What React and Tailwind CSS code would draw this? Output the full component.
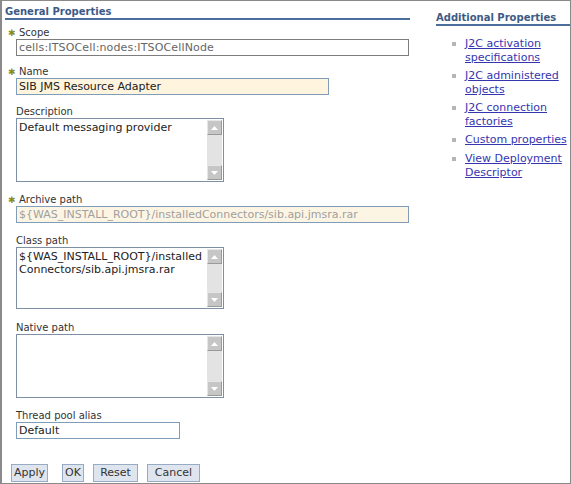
import React from "react";

const Star = () => (
  <span className="inline-block w-[11px] text-[9px] font-bold text-[#8c8c1c] leading-[12px]">✱</span>
);

const Label = ({ req, children, mt }) => (
  <div className={`leading-[12px] text-[#333333] ${mt} ${req ? "pl-[3px]" : "pl-[11px]"}`}>
    {req && <Star />}
    {children}
  </div>
);

const Arrow = ({ up }) => (
  <div className="w-[15px] h-[15px] bg-[#c6c6c6] border border-t-[#e6e6e6] border-l-[#e6e6e6] border-r-[#9a9a9a] border-b-[#9a9a9a] flex items-center justify-center">
    <svg width="7" height="4" viewBox="0 0 7 4">
      {up ? <polygon points="0,4 7,4 3.5,0" fill="#fff" /> : <polygon points="0,0 7,0 3.5,4" fill="#fff" />}
    </svg>
  </div>
);

const TextArea = ({ h, lines = [] }) => (
  <div className={`ml-[11px] w-[208px] ${h} border border-[#7f8fa3] bg-white flex`}>
    <div className="flex-1 pl-[2px] pt-[2px] leading-[13px] text-[11px] text-[#222] whitespace-nowrap overflow-hidden">
      {lines.map((l, i) => (
        <div key={i}>{l}</div>
      ))}
    </div>
    <div className="w-[15px] my-[1px] mr-[1px] bg-[#e3e3e3] flex flex-col justify-between">
      <Arrow up />
      <Arrow />
    </div>
  </div>
);

const Input = ({ w, bg = "bg-white", border = "border-[#7f9db9]", color = "text-[#222]", extra = "", children }) => (
  <div className={`ml-[11px] ${w} h-[17px] border ${border} ${bg} ${color} ${extra} pl-[2px] text-[11px] leading-[15px] whitespace-nowrap overflow-hidden`}>
    {children}
  </div>
);

const Btn = ({ w, ml = "", children }) => (
  <div className={`${w} ${ml} h-[18px] bg-[#dfe5ee] border border-[#98abc4] text-[#333] text-[11px] flex items-center justify-center leading-[14px]`}>
    {children}
  </div>
);

const Link = ({ children, mt = "" }) => (
  <div className={`flex ${mt}`}>
    <div className="w-[13px] pt-[5px]">
      <div className="w-[4px] h-[4px] bg-[#b5b5b5]" />
    </div>
    <div className="leading-[14px] text-[11px] text-[#3535b0] underline whitespace-nowrap">{children}</div>
  </div>
);

export default function App() {
  return (
    <div className="w-[571px] h-[484px] bg-white border-l-2 border-t border-r border-b border-[#8a8a8a] flex font-['DejaVu_Sans',Verdana,sans-serif] text-[10px] overflow-hidden">
      <div className="w-[410px] pl-[3px] pt-[4px]">
        <div className="w-[405px] leading-[13px] font-bold text-[#3d5a86] border-b-2 border-[#4b6f9c]">
          General Properties
        </div>
        <Label req mt="mt-[7px]">Scope</Label>
        <Input w="w-[393px]" border="border-[#7d7d7d]" color="text-[#666]" extra="tracking-[0.15px]">
          cells:ITSOCell:nodes:ITSOCellNode
        </Input>
        <Label req mt="mt-[10px]">Name</Label>
        <Input w="w-[313px]" bg="bg-[#fff5de]">SIB JMS Resource Adapter</Input>
        <Label mt="mt-[11px]">Description</Label>
        <TextArea h="h-[64px]" lines={["Default messaging provider"]} />
        <Label req mt="mt-[12px]">Archive path</Label>
        <Input w="w-[393px]" bg="bg-[#fdf5e4]" color="text-[#a0a0a0]">
          ${"{WAS_INSTALL_ROOT}"}/installedConnectors/sib.api.jmsra.rar
        </Input>
        <Label mt="mt-[12px]">Class path</Label>
        <TextArea
          h="h-[62px]"
          lines={["${WAS_INSTALL_ROOT}/installed", "Connectors/sib.api.jmsra.rar"]}
        />
        <Label mt="mt-[13px]">Native path</Label>
        <TextArea h="h-[64px]" />
        <Label mt="mt-[12px]">Thread pool alias</Label>
        <Input w="w-[164px]">Default</Input>
        <div className="flex mt-[25px] ml-[6px]">
          <Btn w="w-[37px]">Apply</Btn>
          <Btn w="w-[22px]" ml="ml-[14px]">OK</Btn>
          <Btn w="w-[45px]" ml="ml-[9px]">Reset</Btn>
          <Btn w="w-[53px]" ml="ml-[9px]">Cancel</Btn>
        </div>
      </div>
      <div className="flex-1 pl-[24px] pt-[10px]">
        <div className="leading-[13px] font-bold text-[#3d5a86] border-b-2 border-[#4b6f9c] whitespace-nowrap">
          Additional Properties
        </div>
        <div className="pl-[16px] mt-[11px]">
          <Link>J2C activation<br />specifications</Link>
          <Link mt="mt-[4px]">J2C administered<br />objects</Link>
          <Link mt="mt-[4px]">J2C connection<br />factories</Link>
          <Link mt="mt-[4px]">Custom properties</Link>
          <Link mt="mt-[5px]">View Deployment<br />Descriptor</Link>
        </div>
      </div>
    </div>
  );
}
